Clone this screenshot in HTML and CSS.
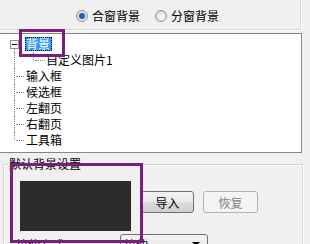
FILE: index.html
```html
<!DOCTYPE html>
<html lang="zh-CN">
<head>
  <meta charset="UTF-8">
  <link rel="stylesheet" href="styles.css">
</head>
<body>
<div class="panel">
  <div class="mode-group">
    <label class="radio"><span class="dot checked"></span>合窗背景</label>
    <label class="radio second"><span class="dot"></span>分窗背景</label>
  </div>

  <div class="tree">
    <div class="tree-row">
      <span class="twig open"><span class="expander"></span></span>
      <span class="node selected">背景</span>
    </div>
    <div class="tree-row">
      <span class="twig pass"></span>
      <span class="twig-sub"></span>
      <span class="node">自定义图片1</span>
    </div>
    <div class="tree-row">
      <span class="twig"></span>
      <span class="node">输入框</span>
    </div>
    <div class="tree-row">
      <span class="twig"></span>
      <span class="node">候选框</span>
    </div>
    <div class="tree-row">
      <span class="twig"></span>
      <span class="node">左翻页</span>
    </div>
    <div class="tree-row">
      <span class="twig"></span>
      <span class="node">右翻页</span>
    </div>
    <div class="tree-row">
      <span class="twig last"></span>
      <span class="node">工具箱</span>
    </div>
  </div>

  <div class="bg-group">
    <div class="group-title">默认背景设置</div>
    <div class="preview-row">
      <div class="preview"></div>
      <button class="btn">导入</button>
      <button class="btn restore" disabled>恢复</button>
    </div>
    <div class="stretch-row">
      <span class="stretch-label">拉伸方式</span>
      <div class="combo">拉伸<span class="arrow"></span></div>
    </div>
  </div>

  <div class="mark mark-tree"></div>
  <div class="mark mark-preview"></div>
</div>
</body>
</html>
```

FILE: styles.css
```css
body {
  margin: 0;
  background-color: #f0f0f0;
  color: #000;
  font-family: "Noto Sans CJK SC", "Liberation Sans", sans-serif;
  font-size: 12px;
  overflow: hidden;
}

.panel {
  position: relative;
  width: 310px;
  height: 244px;
  overflow: hidden;
}

/* 上のラジオ */
.mode-group {
  display: flex;
  align-items: flex-start;
  margin: -10px 0 0 -10px;
  width: 311px;
  height: 40px;
  box-sizing: border-box;
  padding: 18px 0 0 85px;
  border: 1px solid #d5d5d5;
  box-shadow: 1px 1px 0 #fff;
}

.radio {
  display: flex;
  align-items: center;
  height: 14px;
  line-height: 14px;
}

.radio.second {
  margin-left: 15px;
}

.dot {
  width: 12px;
  height: 12px;
  margin-right: 4px;
  box-sizing: border-box;
  border: 1px solid #8e8f8f;
  border-radius: 50%;
  background: radial-gradient(circle at 60% 65%, #fdfdfd 0, #e2e2e2 60%, #cfcfcf 100%);
}

.dot.checked {
  background: radial-gradient(circle at 50% 50%, #1c6fbf 0, #1b5aa0 30%, #6aa9e0 45%, #eaeaea 55%, #f6f6f6 100%);
}

/* ツリー */
.tree {
  margin: 3px 0 0 -1px;
  width: 303px;
  height: 120px;
  box-sizing: border-box;
  padding-top: 2px;
  border: 1px solid #828790;
  background: #fff;
}

.tree-row {
  display: flex;
  align-items: center;
  height: 16px;
}

.twig,
.twig-sub {
  position: relative;
  flex: none;
  height: 16px;
}

.twig {
  width: 25px;
}

.twig-sub {
  width: 20px;
}

.twig::before {
  content: "";
  position: absolute;
  left: 14px;
  top: 0;
  bottom: 0;
  border-left: 1px dotted #8a8a8a;
}

.twig::after {
  content: "";
  position: absolute;
  left: 16px;
  top: 8px;
  width: 8px;
  border-top: 1px dotted #8a8a8a;
}

.twig.last::before {
  bottom: 8px;
}

.twig.pass::after {
  display: none;
}

.twig.open::before {
  top: 13px;
}

.twig.open::after {
  display: none;
}

.twig-sub::before {
  content: "";
  position: absolute;
  left: 8px;
  top: 0;
  height: 8px;
  border-left: 1px dotted #8a8a8a;
}

.twig-sub::after {
  content: "";
  position: absolute;
  left: 10px;
  top: 8px;
  width: 10px;
  border-top: 1px dotted #8a8a8a;
}

.expander {
  position: absolute;
  left: 10px;
  top: 4px;
  width: 9px;
  height: 9px;
  box-sizing: border-box;
  border: 1px solid #919191;
  background: #fff;
}

.expander::after {
  content: "";
  position: absolute;
  left: 1px;
  top: 3px;
  width: 5px;
  height: 1px;
  background: #000;
}

.node {
  padding: 0 1px;
  line-height: 14px;
  white-space: nowrap;
}

.node.selected {
  background: #3399ff;
  color: #fff;
  outline: 1px dotted #000;
  outline-offset: -1px;
  padding: 0 2px 0 1px;
}

/* 下のグループ */
.bg-group {
  margin: 11px 0 0 3px;
  width: 300px;
  height: 100px;
  box-sizing: border-box;
  border: 1px solid #d5d5d5;
  box-shadow: 1px 1px 0 #fff, inset 1px 1px 0 #fff;
}

.group-title {
  width: fit-content;
  margin: -8px 0 0 4px;
  padding: 0 1px;
  line-height: 14px;
  background: #f0f0f0;
}

.preview-row {
  display: flex;
  align-items: flex-start;
  margin-top: 10px;
  padding-left: 16px;
}

.preview {
  width: 111px;
  height: 50px;
  background: #2b2b2b;
}

.btn {
  width: 53px;
  height: 22px;
  margin: 10px 0 0 10px;
  padding: 0;
  box-sizing: border-box;
  border: 1px solid #707070;
  border-radius: 3px;
  background: linear-gradient(#f2f2f2 0, #ebebeb 50%, #dddddd 50%, #cfcfcf 100%);
  font-family: inherit;
  font-size: 12px;
  color: #000;
}

.btn.restore {
  width: 55px;
  margin-left: 9px;
  border-color: #adb2b5;
  background: #f4f4f4;
  color: #838383;
}

.stretch-row {
  display: flex;
  align-items: center;
  margin-top: 3px;
  padding-left: 12px;
}

.stretch-label {
  width: 104px;
}

.combo {
  position: relative;
  width: 88px;
  height: 21px;
  box-sizing: border-box;
  padding-left: 3px;
  line-height: 19px;
  border: 1px solid #707070;
  border-radius: 3px;
  background: linear-gradient(#f2f2f2, #e6e6e6);
}

.arrow {
  position: absolute;
  right: 7px;
  top: 7px;
  border-left: 4px solid transparent;
  border-right: 4px solid transparent;
  border-top: 4px solid #000;
}

/* 注釈の枠 */
.mark {
  position: absolute;
  box-sizing: border-box;
  border: 3px solid #7a1d7e;
}

.mark-tree {
  left: 19px;
  top: 29px;
  width: 46px;
  height: 28px;
}

.mark-preview {
  left: 10px;
  top: 163px;
  width: 133px;
  height: 80px;
}
```
